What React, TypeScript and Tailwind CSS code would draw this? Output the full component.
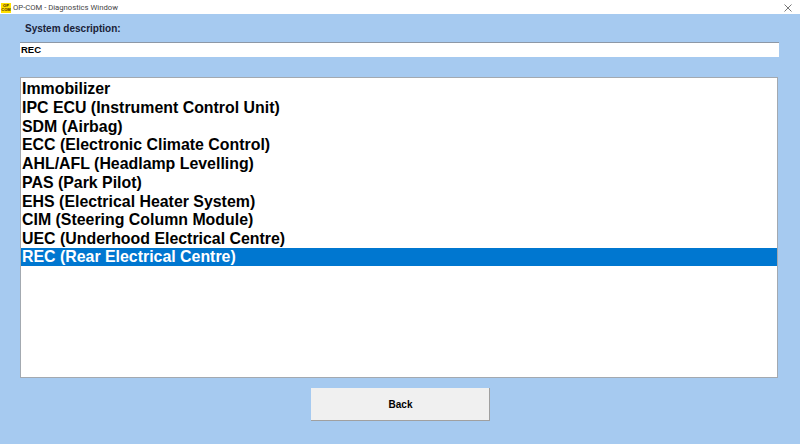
import React from 'react';

const systems = [
  'Immobilizer',
  'IPC ECU (Instrument Control Unit)',
  'SDM (Airbag)',
  'ECC (Electronic Climate Control)',
  'AHL/AFL (Headlamp Levelling)',
  'PAS (Park Pilot)',
  'EHS (Electrical Heater System)',
  'CIM (Steering Column Module)',
  'UEC (Underhood Electrical Centre)',
  'REC (Rear Electrical Centre)',
];

const App: React.FC = () => {
  return (
    <div className="w-[800px] h-[444px] flex flex-col overflow-hidden bg-[#a6caf0] font-['Liberation_Sans',Arial,sans-serif]">
      {/* title bar */}
      <div className="h-[14px] bg-white flex items-center shrink-0">
        <div className="w-[10px] h-[10px] ml-px mt-[2px] bg-[#ffe000] flex flex-col items-center justify-center text-[4px] leading-[4px] font-bold text-[#402000]">
          <span>OP</span>
          <span>COM</span>
        </div>
        <span className="ml-[2px] mt-px text-[7.7px] text-[#444] font-['Roboto',sans-serif]">OP-COM - Diagnostics Window</span>
        <svg className="ml-auto mr-[8px] mt-[1px]" width="8" height="8" viewBox="0 0 8 8" fill="none" stroke="#555" strokeWidth="0.8">
          <path d="M0.5 0.5L7.5 7.5M7.5 0.5L0.5 7.5" />
        </svg>
      </div>

      <div className="flex-1 flex flex-col pl-[20px] pr-[21px]">
        <div className="h-[28px] pl-[5px] pt-[8px] text-[10px] leading-[14px] font-bold text-[#1a2238]">System description:</div>
        <div className="h-[15px] bg-white border-t border-[#8d98a6] pl-px text-[9.5px] leading-[13px] font-bold text-black">REC</div>

        <div className="mt-[20px] h-[301px] mr-px bg-white border border-[#a3a9b0] pt-px">
          {systems.map((name, i) => (
            <div
              key={name}
              className={
                i === systems.length - 1
                  ? 'h-[18px] pl-px text-[15.9px] leading-[18px] font-bold whitespace-nowrap bg-[#0077d0] text-white'
                  : 'h-[18.78px] pl-px text-[15.9px] leading-[19px] font-bold whitespace-nowrap text-black'
              }
            >
              {name}
            </div>
          ))}
        </div>

        <div className="flex justify-center mt-[10px]">
          <button className="w-[179px] h-[33px] ml-px pl-[2px] pt-px bg-[#f0f0f0] border-r border-b border-[#a0a0a0] text-[10px] font-bold text-black">
            Back
          </button>
        </div>
      </div>
    </div>
  );
};

export default App;
